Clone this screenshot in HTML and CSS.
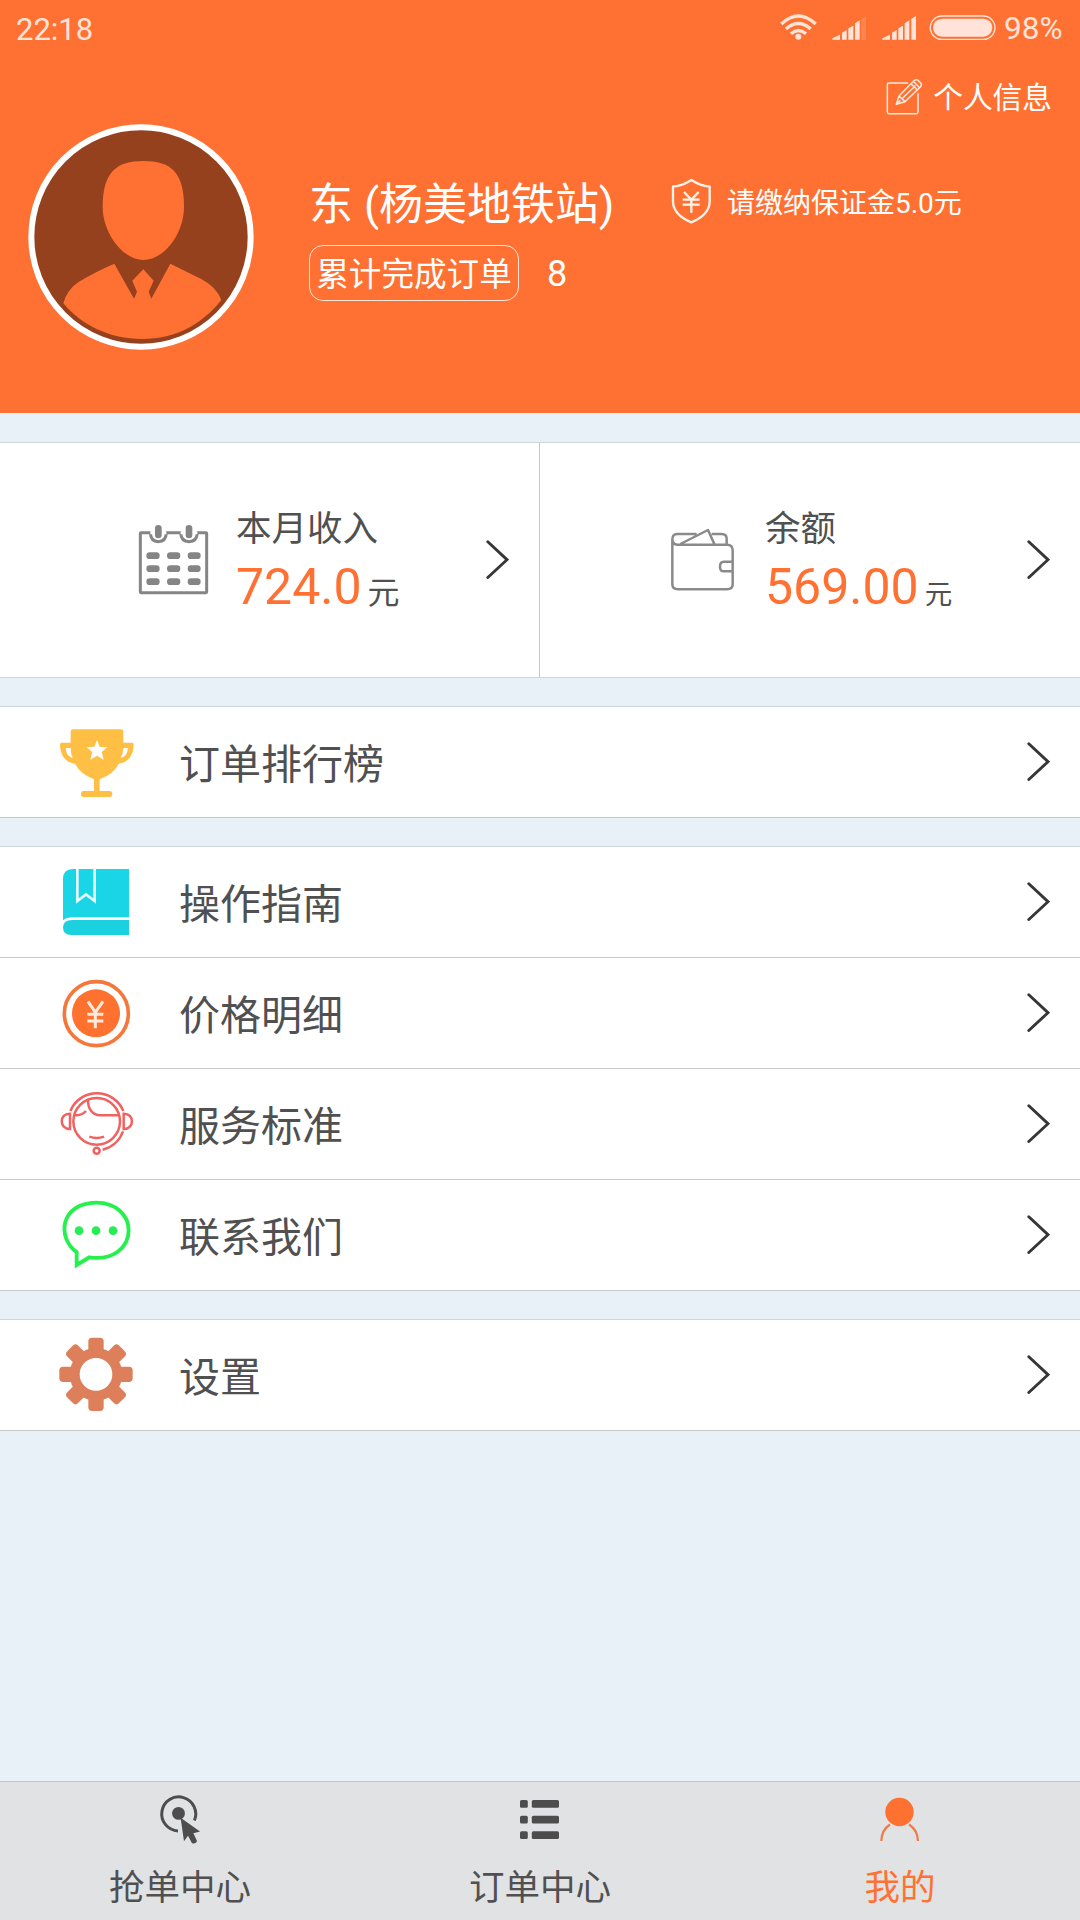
FILE: index.html
```html
<!DOCTYPE html>
<html lang="zh-CN">
<head>
<meta charset="utf-8">
<title>我的</title>
<link rel="stylesheet" href="styles.css">
</head>
<body>
<svg class="defs" width="0" height="0">
  <symbol id="chevron" viewBox="0 0 23 39"><path d="M1.8 1.8 21 19.7 1.8 37.5" fill="none" stroke="#363636" stroke-width="2.9" stroke-linecap="round" stroke-linejoin="miter"/></symbol>
</svg>
<header class="header">
  <div class="status">
    <span class="time">22:18</span>
    <svg class="wifi" viewBox="60 36 111 96" fill="none" stroke="#ffe3d6" stroke-width="10"><path d="M64 72Q115 24 167 72M78 87Q115 54 152 87M93 101Q115 82 138 101"/><circle cx="115" cy="110" r="9" fill="#ffe3d6" stroke="none"/></svg>
    <svg class="signal" viewBox="216 36 102 96" fill="#ffe3d6"><path d="M217 119V115L240 104V119ZM246 119V98L260 90V119ZM265 119V85L280 77V119ZM285 119V70L299 61V119Z"/><path d="M304 119V58L318 49V119Z" opacity=".18"/></svg>
    <svg class="signal second" viewBox="366 36 102 96" fill="#ffe3d6"><path d="M367 119V115L390 104V119ZM396 119V98L410 90V119ZM415 119V85L429 77V119ZM434 119V70L448 61V119ZM454 119V56L468 48V119Z"/></svg>
    <svg class="battery" viewBox="507 36 201 96"><rect x="511" y="48" width="194" height="70" rx="35" fill="none" stroke="#ffe3d6" stroke-width="4"/><rect x="519" y="56" width="178" height="54" rx="27" fill="#ffe3d9"/></svg>
    <span class="percent">98%</span>
  </div>
  <div class="edit">
    <svg viewBox="378 234 114 114" fill="none" stroke="#ffe9dc" stroke-width="4.5" stroke-linejoin="round" stroke-linecap="round"><path d="M443 249H387Q382 249 382 254V336Q382 341 387 341H469Q474 341 474 336V281"/><path d="M409 313 417 288 461 243Q466 237 473 240L482 249Q487 255 481 261L435 305ZM417 288 435 305M453 251 472 270M460 244 479 263M426 296 465 258M409 313 420 302"/></svg>
    <span>个人信息</span>
  </div>
  <div class="profile">
    <svg class="avatar" viewBox="84 372 678 678"><circle cx="423" cy="711" r="329" fill="#96411e" stroke="#fff" stroke-width="18"/><g fill="#ff7133"><path d="M430 483C512 483 552 516 552 620C552 700 492 780 430 780C370 780 308 700 308 620C308 516 350 483 430 483Z"/><path d="M343 791 402 896 411 875 397 842 430 808 461 842 446 875 454 896 511 791 605 838Q649 861 664 900C605 973 530 1017 426 1017C330 1017 246 977 190 910Q201 868 237 845Q285 816 343 791Z"/></g></svg>
    <div class="info">
      <div class="name-line">
        <h1>东 (杨美地铁站)</h1>
        <svg class="shield" viewBox="63 54 123 138" fill="none" stroke="#fff3ea" stroke-width="7" stroke-linejoin="round"><path d="M124 60Q98 77 69 80V125Q70 164 124 187Q178 164 179 125V80Q150 77 124 60Z"/><path d="M102 96 124 119 146 96M98 119H149M98 134H149M124 119V158"/></svg>
        <span class="deposit">请缴纳保证金5.0元</span>
      </div>
      <div class="orders"><span class="badge">累计完成订单</span><span class="count">8</span></div>
    </div>
  </div>
</header>

<section class="money">
  <a class="cell income">
    <svg class="cal" viewBox="54 102 213 213" fill="none" stroke="#858585" stroke-width="9"><path d="M91 128H63Q61 128 61 130V306Q61 308 63 308H258Q260 308 260 306V130Q260 128 258 128H232Q231 155 207 155Q183 155 182 128H139Q138 155 115 155Q92 155 91 128Z" stroke-linejoin="round"/><path d="M91 128H139M182 128H232" stroke="#fff"/><path d="M115 115V135M207 115V135" stroke-width="20" stroke-linecap="round"/><path d="M89 197H109M151 197H171M213 197H232M89 236H109M151 236H171M213 236H232M89 275H109M151 275H171M213 275H232" stroke-width="20" stroke-linecap="round"/></svg>
    <div class="amount"><h2>本月收入</h2><p><b>724.0</b><span>元</span></p></div>
    <svg class="chevron"><use href="#chevron"/></svg>
  </a>
  <a class="cell balance">
    <svg class="wallet" viewBox="60 114 195 189" fill="none" stroke="#8a8a8a" stroke-width="7.5" stroke-linejoin="round"><path d="M67 148V283Q67 298 84 298H231Q248 298 248 283V181Q248 164 231 164H82Q67 164 67 148Q67 132 82 132H140M185 132H215Q230 132 230 147V164M91 162 174 120 193 162M248 215H221Q210 215 210 230Q210 244 221 244H248"/></svg>
    <div class="amount"><h2>余额</h2><p><b>569.00</b><span>元</span></p></div>
    <svg class="chevron"><use href="#chevron"/></svg>
  </a>
</section>

<ul class="list">
  <li><svg class="icon" viewBox="54 72 228 228"><path d="M98 88H243Q250 88 250 96V128H276Q282 128 281 137Q277 186 236 191Q221 222 179 238V273H209Q217 273 217 282Q217 291 209 291H131Q123 291 123 282Q123 273 131 273H162V238Q121 222 105 191Q64 186 60 137Q59 128 65 128H92V96Q92 88 98 88Z" fill="#ffbf45"/><path d="M77 144H92Q92 162 98 174Q79 168 77 144ZM264 144H250Q249 162 242 174Q262 168 264 144ZM171 120 179 140 202 142 185 156 191 179 171 167 151 179 157 156 140 142 163 140Z" fill="#fff"/></svg><span>订单排行榜</span><svg class="chevron"><use href="#chevron"/></svg></li>
</ul>

<ul class="list">
  <li><svg class="icon" viewBox="54 492 228 228"><path d="M267 507V652H98Q79 652 69 661V537Q69 507 99 507Z" fill="#1ad5e6"/><path d="M267 660V705H94Q69 705 69 682Q69 660 98 660Z" fill="#1bd1df"/><path d="M112 507V603L138 583 164 603V507" fill="none" stroke="#e4fbff" stroke-width="8"/></svg><span>操作指南</span><svg class="chevron"><use href="#chevron"/></svg></li>
  <li><svg class="icon" viewBox="54 45 228 228"><circle cx="169" cy="161" r="96" fill="#fff" stroke="#f4773b" stroke-width="11"/><circle cx="168" cy="160" r="72" fill="#ff712f"/><path d="M144 124 166 157 189 124M142 163H190M142 183H190M166 157V205" fill="none" stroke="#ffeadc" stroke-width="9"/></svg><span>价格明细</span><svg class="chevron"><use href="#chevron"/></svg></li>
  <li><svg class="icon headset" viewBox="54 378 228 228" fill="none" stroke="#f2605f" stroke-width="7.5"><circle cx="170" cy="487" r="70"/><path d="M91 456A86 86 0 0 1 250 456M249 517A86 86 0 0 1 188 572M90 464V510C57 511 57 463 90 464ZM251 464V510C284 511 284 463 251 464ZM144 421C143 449 157 469 181 469H239M104 469Q125 470 138 456M148 533Q170 541 192 533"/><circle cx="170" cy="575" r="9"/></svg><span>服务标准</span><svg class="chevron"><use href="#chevron"/></svg></li>
  <li><svg class="icon" viewBox="54 711 228 228"><path d="M110 876C51 835 58 729 169 728C229 728 266 767 266 811C266 864 218 902 148 892L110 915Z" fill="none" stroke="#25f04e" stroke-width="11.5"/><g fill="#25ee55"><circle cx="117" cy="812" r="13"/><circle cx="168" cy="812" r="13"/><circle cx="219" cy="812" r="13"/></g></svg><span>联系我们</span><svg class="chevron"><use href="#chevron"/></svg></li>
</ul>

<ul class="list">
  <li><svg class="icon" viewBox="54 111 228 228"><g fill="#dd7f5b"><rect x="145" y="113" width="46" height="220" rx="11"/><rect x="145" y="113" width="46" height="220" rx="11" transform="rotate(45 168 223)"/><rect x="145" y="113" width="46" height="220" rx="11" transform="rotate(90 168 223)"/><rect x="145" y="113" width="46" height="220" rx="11" transform="rotate(135 168 223)"/><circle cx="168" cy="223" r="79"/></g><circle cx="168" cy="223" r="49" fill="#fff"/></svg><span>设置</span><svg class="chevron"><use href="#chevron"/></svg></li>
</ul>

<nav class="tabs">
  <a><svg viewBox="0 0 60 60" fill="#4d4d4d"><path d="M28 40.9A17 17 0 1 1 44.4 30.5" fill="none" stroke="#4d4d4d" stroke-width="3"/><circle cx="28.5" cy="23.4" r="6.4"/><path d="M30.6 27.8 50 41.5 43.4 43.3 47 51Q46.5 53.2 44 53.5L42 53.2 38 45.8 34 51.3Z"/></svg><span>抢单中心</span></a>
  <a><svg viewBox="0 0 60 60" fill="#4d4d4d"><rect x="10" y="10" width="7.8" height="7.8" rx="1.6"/><rect x="21.8" y="10" width="27.2" height="7.8" rx="1.6"/><rect x="10" y="25.7" width="7.8" height="7.8" rx="1.6"/><rect x="21.8" y="25.7" width="27.2" height="7.8" rx="1.6"/><rect x="10" y="41.3" width="7.8" height="7.8" rx="1.6"/><rect x="21.8" y="41.3" width="27.2" height="7.8" rx="1.6"/></svg><span>订单中心</span></a>
  <a class="active"><svg viewBox="0 0 60 60"><circle cx="29.5" cy="22" r="14.2" fill="#ff7130"/><path d="M20 34.5Q11.5 40 11.3 51M39 34.5Q47.7 40 48 51" fill="none" stroke="#ee7b4d" stroke-width="2.2"/></svg><span>我的</span></a>
</nav>
</body>
</html>
```

FILE: styles.css
```css
* { box-sizing: border-box; margin: 0; padding: 0; }

body {
  width: 1080px;
  height: 1920px;
  display: flex;
  flex-direction: column;
  background: #e8f0f8;
  color: #505050;
  font-family: Roboto, "Noto Sans CJK SC", sans-serif;
  font-weight: 400;
  white-space: nowrap;
  overflow: hidden;
}

svg { display: block; flex: none; }
.defs { position: absolute; }
h1, h2, b { font-weight: inherit; }

.header {
  height: 413px;
  background: #ff7133;
  color: #fff;
}

.status {
  height: 56px;
  display: flex;
  align-items: center;
  padding: 0 16px;
  color: #ffe3d6;
  font-size: 31px;
}
.time { margin-right: auto; padding-top: 2px; }
.wifi { width: 37px; height: 32px; margin-right: 15px; }
.signal { width: 34px; height: 32px; margin-right: 16px; }
.signal.second { margin-right: 13px; }
.battery { width: 67px; height: 32px; margin-right: 8px; }
.percent { width: 60px; padding-top: 1px; font-size: 31.5px; }

.edit {
  height: 68px;
  padding: 22px 28px 0 0;
  display: flex;
  justify-content: flex-end;
  gap: 9px;
  font-size: 29.7px;
  line-height: 40px;
}
.edit svg { width: 38px; height: 38px; }

.profile { display: flex; padding-left: 28px; }
.avatar { width: 226px; height: 226px; }
.info { margin: 47px 0 0 55px; }
.name-line { display: flex; align-items: center; height: 61px; }
.name-line h1 { width: 362px; padding-top: 8px; font-size: 44px; line-height: 61px; }
.shield { width: 41px; height: 46px; margin-top: -1px; }
.deposit { margin: -2px 0 0 15px; font-size: 28px; }
.orders { display: flex; align-items: center; margin-top: 13px; }
.badge {
  width: 210px;
  height: 56px;
  border: 1px solid #ffe6d8;
  border-radius: 14px;
  text-align: center;
  font-size: 32.6px;
  line-height: 58px;
}
.count { margin-left: 28px; padding-top: 1px; font-size: 36px; }

.money {
  display: flex;
  height: 236px;
  margin-top: 29px;
  background: #fff;
  border-top: 1px solid #cdd6dc;
  border-bottom: 1px solid #cdd6dc;
}
.cell { display: flex; align-items: center; width: 540px; padding-bottom: 2px; }
.income { padding-left: 138px; padding-right: 30px; border-right: 1px solid #c4c6c8; }
.balance { padding-left: 130px; padding-right: 30px; }
.cal { width: 71px; height: 71px; }
.wallet { width: 65px; height: 63px; }
.income .amount { margin-left: 27px; }
.balance .amount { margin-left: 30px; }
.amount { padding-top: 6px; }
.amount h2 { font-size: 35.5px; line-height: 50px; }
.amount p { line-height: 66px; height: 66px; }
.amount b { color: #ff7133; font-size: 50px; }
.amount span { margin-left: 6px; font-size: 32px; }
.balance .amount span { font-size: 27.5px; }
.chevron { width: 23px; height: 39px; margin-left: auto; }

.list {
  list-style: none;
  margin-top: 28px;
  background: #fff;
  border-top: 1px solid #cdd6dc;
}
.list li {
  display: flex;
  align-items: center;
  height: 111px;
  padding: 0 30px 0 58px;
  border-bottom: 1px solid #c6c9cc;
  font-size: 41px;
}
.list span { margin-top: -3px; }
.list .chevron { margin-top: -1px; }
.icon { width: 76px; height: 76px; margin-right: 45px; }
.headset { margin-top: -2px; }

.tabs {
  display: flex;
  height: 139px;
  margin-top: auto;
  background: #e0e2e3;
  border-top: 1px solid #bac7cf;
  font-size: 35.5px;
}
.tabs a {
  flex: 1;
  display: flex;
  flex-direction: column;
  align-items: center;
  padding-top: 8px;
}
.tabs svg { width: 60px; height: 60px; }
.tabs span { margin-top: 12px; line-height: 52px; }
.tabs .active { color: #ff7133; }
```
